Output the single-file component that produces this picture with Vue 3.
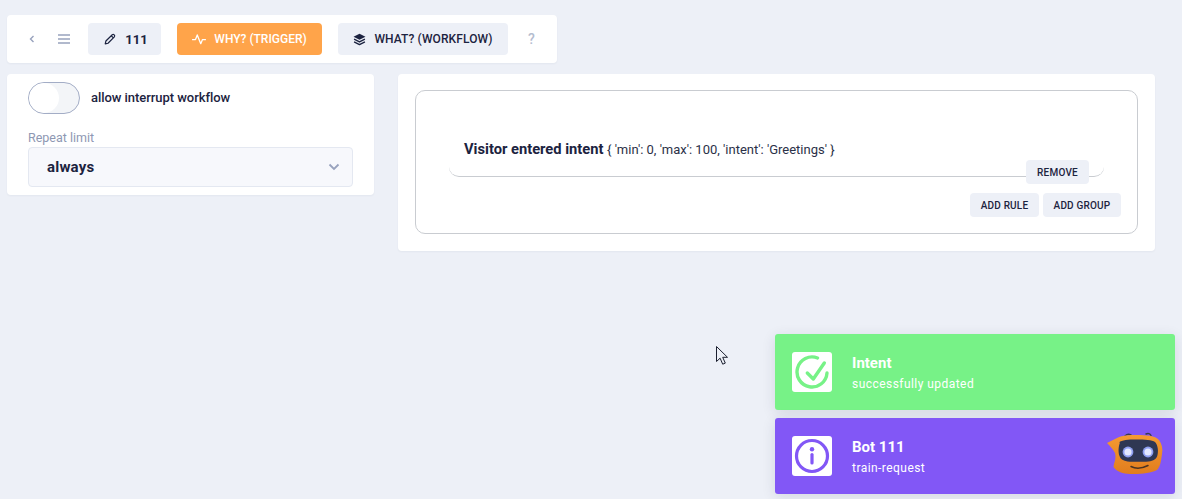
<template>
  <div class="page">
    <div class="topbar">
      <button class="icon-btn back" aria-label="back">
        <svg width="10" height="10" viewBox="0 0 10 10"><path d="M6.5 2 3.5 5l3 3" fill="none" stroke="#98a2bd" stroke-width="1.4"/></svg>
      </button>
      <button class="icon-btn menu" aria-label="menu">
        <svg width="14" height="12" viewBox="0 0 14 12"><path d="M1 2h12M1 6h12M1 10h12" fill="none" stroke="#98a2bd" stroke-width="1.4"/></svg>
      </button>
      <button class="tab name">
        <svg width="12" height="12" viewBox="0 0 24 24"><path d="M16.5 3.5a3 3 0 0 1 4.2 4.2L8 20.5l-5.5 1.2L3.8 16z M14.5 5.5l4.2 4.2" fill="none" stroke="#1c2340" stroke-width="2.4" stroke-linejoin="round"/></svg>
        <span>111</span>
      </button>
      <button class="tab orange">
        <svg width="14" height="14" viewBox="0 0 24 24"><path d="M1 13h5l3-8 6 15 3-7h5" fill="none" stroke="#fff" stroke-width="2.2" stroke-linejoin="round" stroke-linecap="round"/></svg>
        <span>WHY? (TRIGGER)</span>
      </button>
      <button class="tab what">
        <svg width="13" height="13" viewBox="0 0 24 24"><path d="M12 1.5 23 7l-11 5.5L1 7z" fill="#1c2340"/><path d="M2 11.5 12 16.5l10-5M2 16.5l10 5 10-5" fill="none" stroke="#1c2340" stroke-width="2.6" stroke-linejoin="round"/></svg>
        <span>WHAT? (WORKFLOW)</span>
      </button>
      <span class="help">?</span>
    </div>

    <div class="columns">
      <div class="card settings">
        <div class="switch-row">
          <span class="switch"><span class="knob"></span></span>
          <span class="switch-label">allow interrupt workflow</span>
        </div>
        <label class="field-label">Repeat limit</label>
        <div class="select">
          <span>always</span>
          <svg width="12" height="8" viewBox="0 0 12 8"><path d="M1.5 1.5 6 6l4.5-4.5" fill="none" stroke="#98a2bd" stroke-width="1.8"/></svg>
        </div>
      </div>

      <div class="card builder">
        <div class="group">
          <div class="rule">
            <b>Visitor entered intent</b> <span class="params">{ 'min': 0, 'max': 100, 'intent': 'Greetings' }</span>
            <button class="small remove">REMOVE</button>
          </div>
          <div class="group-actions">
            <button class="small">ADD RULE</button>
            <button class="small">ADD GROUP</button>
          </div>
        </div>
      </div>
    </div>

    <svg class="cursor" width="14" height="21" viewBox="0 0 14 21"><path d="M1.5 1.5v15l3.6-3.3 2.6 6 2.6-1.1-2.6-5.8h4.8z" fill="#edf0f7" stroke="#1c2030" stroke-width="1"/></svg>

    <div class="toasts">
      <div v-for="t in toasts" :key="t.title" class="toast" :class="t.kind">
        <div class="toast-icon">
          <svg v-if="t.kind === 'ok'" width="36" height="36" viewBox="0 0 36 36">
            <path d="M33 19A15 15 0 1 1 23.5 4" fill="none" stroke="#77f287" stroke-width="3.4" stroke-linecap="round"/>
            <path d="M13.3 19l6 6 11-16" fill="none" stroke="#77f287" stroke-width="3.4" stroke-linecap="round" stroke-linejoin="round"/>
          </svg>
          <svg v-else width="36" height="36" viewBox="0 0 36 36">
            <circle cx="18" cy="18" r="15.5" fill="none" stroke="#8257f6" stroke-width="3.2"/>
            <circle cx="18" cy="11.3" r="2.2" fill="#8257f6"/>
            <path d="M18 16.5v8.5" stroke="#8257f6" stroke-width="3.2" stroke-linecap="round"/>
          </svg>
        </div>
        <div class="toast-text">
          <div class="toast-title">{{ t.title }}</div>
          <div class="toast-sub">{{ t.sub }}</div>
        </div>
        <svg v-if="t.kind === 'info'" class="robot" width="60" height="48" viewBox="0 0 60 48">
          <defs>
            <linearGradient id="robotBody" x1="0" y1="0" x2="0" y2="1">
              <stop offset="0" stop-color="#f59a32"/>
              <stop offset="1" stop-color="#e17d1d"/>
            </linearGradient>
          </defs>
          <path d="M20 6c2-2 4-2 6-1M41 4c2-1 4-.5 5 1.5" fill="none" stroke="#3a3d4f" stroke-width="1.5" stroke-linecap="round"/>
          <path d="M2 13 12 8C16 5.500 24 5 32 5c9 0 18 .5 22 5 3 4 4 9 3 14-1 8-2 13-5 16-6 3-17 4.500-27 4-7-.5-13-2-16.500-7 .5-5 3-8 1.500-14C8 19 5 16 2 13z" fill="url(#robotBody)"/>
          <path d="M14 12.500c3-2.500 9-2.900 17-2.900 9 0 16 .4 19 2.400 3 3 3.500 9 2.500 13-1 4-4 6-9 6.400-6 .5-15 .5-21 0-4-.4-7-2-8-5.400-1.500-4-1-10 .5-13.500z" fill="#2f3753"/>
          <circle cx="23" cy="22" r="5.400" fill="#8f9ff0"/>
          <circle cx="23" cy="22" r="3.600" fill="#e3e8ff"/>
          <circle cx="43" cy="22" r="5.400" fill="#8f9ff0"/>
          <circle cx="43" cy="22" r="3.600" fill="#e3e8ff"/>
          <path d="M26 36.500c5 2.500 11 2 17-1" fill="none" stroke="#4a3323" stroke-width="1.5" stroke-linecap="round"/>
        </svg>
      </div>
    </div>
  </div>
</template>

<script setup>
const toasts = [
  { kind: 'ok', title: 'Intent', sub: 'successfully updated' },
  { kind: 'info', title: 'Bot 111', sub: 'train-request' }
]
</script>

<style>
html, body { margin: 0; background: #edf0f7; }
</style>

<style scoped>
.page { position: relative; height: 499px; overflow: hidden; padding: 15px 27px 0 7px; box-sizing: border-box; font-family: Roboto, "Liberation Sans", sans-serif; color: #1c2340; background: #edf0f7; }
button { font-family: inherit; border: none; cursor: pointer; }

.topbar { display: flex; align-items: center; width: 550px; height: 48px; box-sizing: border-box; background: #fff; border-radius: 4px; padding-left: 20px; box-shadow: 0 1px 2px rgba(40, 50, 90, .05); }
.icon-btn { display: flex; align-items: center; background: none; padding: 0; }
.back { width: 15px; }
.menu { width: 46px; padding-left: 15px; box-sizing: border-box; }
.tab { display: flex; align-items: center; justify-content: center; height: 32px; border-radius: 4px; background: #edf0f7; color: #1c2340; font-size: 12px; font-weight: 500; padding: 0; }
.tab svg { margin-right: 8px; }
.name { width: 73px; margin-right: 16px; font-size: 13px; font-weight: 700; padding-left: 3px; box-sizing: border-box; }
.name svg { margin-right: 9px; }
.orange { width: 145px; margin-right: 16px; background: #ffa44a; color: #fff; }
.what { width: 170px; letter-spacing: .1px; }
.help { margin-left: 20px; color: #b4bccf; font-size: 14px; font-weight: 500; }

.columns { display: flex; align-items: flex-start; gap: 24px; margin-top: 11px; }
.card { background: #fff; border-radius: 4px; box-sizing: border-box; box-shadow: 0 1px 2px rgba(40, 50, 90, .05); }

.settings { width: 367px; height: 121px; padding: 8px 21px 0; }
.switch-row { display: flex; align-items: center; gap: 11px; }
.switch { display: block; width: 52px; height: 32px; box-sizing: border-box; border: 1px solid #a3adc6; border-radius: 16px; background: #f3f5f8; overflow: hidden; }
.knob { display: block; width: 30px; height: 30px; border-radius: 50%; background: #fff; }
.switch-label { margin-bottom: 2px; font-size: 13px; font-weight: 500; letter-spacing: -.05px; color: #1c2340; }
.field-label { display: block; margin-top: 15px; font-size: 12.5px; line-height: 17px; color: #8e98b3; }
.select { display: flex; align-items: center; justify-content: space-between; height: 40px; margin-top: 1px; padding: 0 12px 0 18px; box-sizing: border-box; background: #f7f8fc; border: 1px solid #e4e8f1; border-radius: 4px; font-size: 15px; font-weight: 700; letter-spacing: .2px; }

.builder { flex: 1; height: 177px; padding: 16px 17px; }
.group { display: flex; flex-direction: column; height: 144px; box-sizing: border-box; border: 1px solid #c9ccd1; border-radius: 10px; padding: 0 16px 16px 33px; }
.rule { position: relative; height: 86px; box-sizing: border-box; padding: 49px 0 0 15px; border-bottom: 1px solid #c9ccd1; border-radius: 0 0 10px 10px; font-size: 14.7px; line-height: 18px; margin-right: 17px; }
.rule b { font-weight: 700; }
.params { font-size: 13px; font-weight: 400; color: #2b3148; }
.small { height: 24px; padding: 0; border-radius: 4px; background: #edf0f7; color: #1c2340; font-size: 10px; font-weight: 500; letter-spacing: .2px; }
.remove { position: absolute; right: 15px; bottom: -8px; width: 63px; }
.group-actions { display: flex; justify-content: flex-end; gap: 4px; margin-top: 16px; }
.group-actions .small:first-child { width: 69px; }
.group-actions .small:last-child { width: 78px; }

.cursor { position: absolute; left: 715px; top: 345px; }

.toasts { position: absolute; right: 7px; bottom: 5px; display: flex; flex-direction: column; gap: 8px; }
.toast { position: relative; display: flex; align-items: center; width: 400px; height: 76px; box-sizing: border-box; padding-left: 17px; border-radius: 3px; color: #fff; box-shadow: 0 3px 14px rgba(30, 40, 70, .12); }
.toast.ok { background: #77f287; }
.toast.info { background: #8257f6; }
.toast-icon { display: flex; align-items: center; justify-content: center; width: 40px; height: 40px; background: #fff; border-radius: 3px; }
.toast-text { margin-left: 20px; }
.toast-title { margin-top: 1px; font-size: 15px; font-weight: 700; line-height: 20px; }
.toast-sub { margin-top: 3px; font-size: 12px; line-height: 16px; letter-spacing: .45px; }
.robot { position: absolute; right: 10px; top: 12px; }
</style>
